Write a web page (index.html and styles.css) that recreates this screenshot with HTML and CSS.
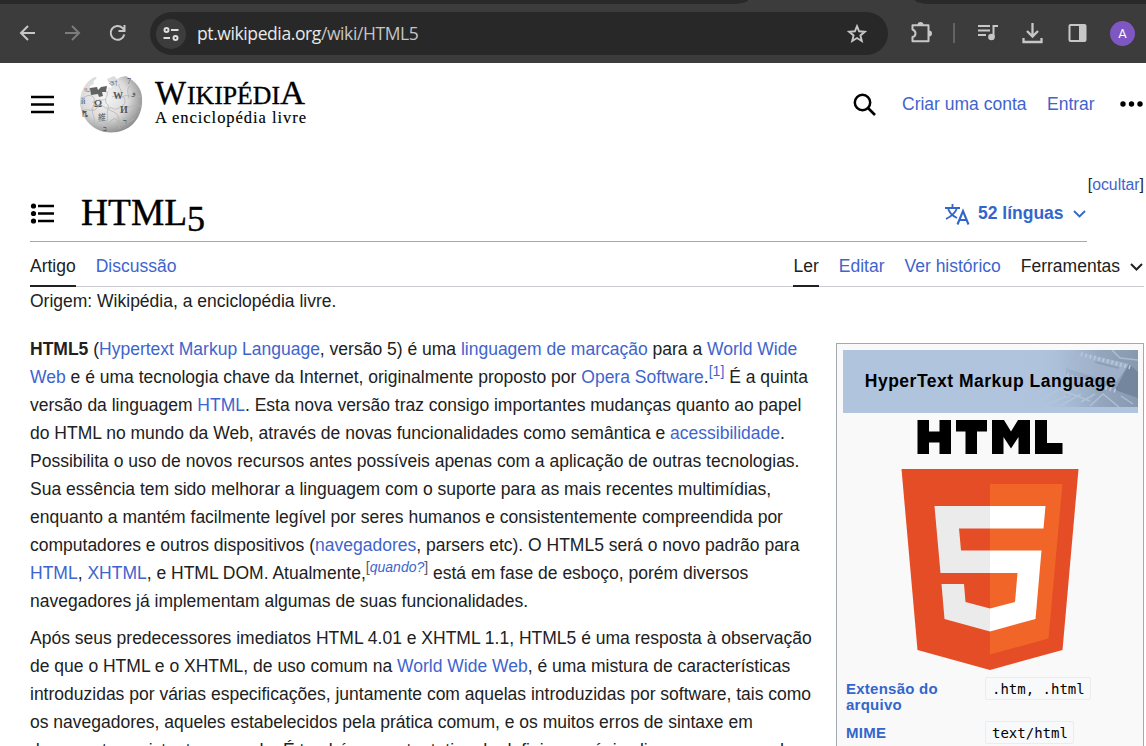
FILE: index.html
```html
<!DOCTYPE html>
<html lang="pt">
<head>
<meta charset="utf-8">
<title>HTML5 – Wikipédia, a enciclopédia livre</title>
<link rel="stylesheet" href="styles.css">
</head>
<body>
<header class="browser">
  <div class="tabstrip"><span class="tab-left"></span><span class="tab-right"></span></div>
  <div class="toolbar">
    <svg class="nav-icons" width="150" height="59" viewBox="0 4 150 59" fill="none" stroke="#c7c7c7" stroke-width="2">
      <path d="M35 33H22M28 26L21 33L28 40"/>
      <path stroke="#7c7c7c" d="M65 33H78M72 26L79 33L72 40"/>
      <path d="M124.300 34.500A6.900 6.900 0 1 1 122.500 28L124.500 30.500M124.500 25V31H118.500"/>
    </svg>
    <div class="address">
      <span class="site-info">
        <svg width="18" height="18" viewBox="0 0 18 18" fill="none" stroke="#dedede" stroke-width="2"><circle cx="4.500" cy="5" r="2"/><path d="M9 5H16.500M1.500 13H8"/><circle cx="13.500" cy="13" r="2"/></svg>
      </span>
      <span class="url">pt.wikipedia.org<span class="path">/wiki/HTML5</span></span>
      <svg class="star" width="22" height="22" viewBox="0 0 22 22" fill="none" stroke="#c7c7c7" stroke-width="1.900"><path d="M11 3.200L13.100 8.300L18.800 8.700L14.400 12.400L15.800 18L11 15L6.200 18L7.600 12.400L3.200 8.700L8.900 8.300Z"/></svg>
    </div>
    <svg class="tools" width="258" height="59" viewBox="888 4 258 59" fill="none" stroke="#c7c7c7" stroke-width="2">
      <path d="M912.500 25.200H928.500V41.300H912.500V37C916.500 36 916.500 31 912.500 29.500V25.200Z" stroke-linejoin="round"/>
      <path d="M917.500 25A3 3 0 0 1 923.500 25ZM929 30.500A3 3 0 0 1 929 36.500Z" fill="#c7c7c7" stroke="none"/>
      <path stroke="#636363" d="M954 23V43"/>
      <path d="M978 26H990M978 30.500H990M978 35H986M993.500 37V26H998"/>
      <circle cx="991.500" cy="37" r="3.300" fill="#c7c7c7" stroke="none"/>
      <path stroke-width="2.300" d="M1032.500 23V36M1027 31L1032.500 36.500L1038 31M1023.500 38V42H1041.500V38"/>
      <rect x="1069.500" y="25" width="16" height="16" rx="1"/><path fill="#c7c7c7" stroke="none" d="M1079 25H1086V41H1079Z"/>
      <circle cx="1122.500" cy="33.500" r="12.500" fill="#7e57c2" stroke="none"/>
      <text class="avatar" x="1122.500" y="38" text-anchor="middle">A</text>
    </svg>
  </div>
</header>

<div class="page">
  <div class="site-header">
    <svg class="menu" width="24" height="20" viewBox="0 0 24 20"><path d="M1 2H24M1 9.500H24M1 17H24" stroke="#000" stroke-width="2.300"/></svg>
    <svg class="logo" width="230" height="64" viewBox="79 72 230 64">
      <defs>
        <radialGradient id="ball" cx=".4" cy=".38" r=".68"><stop offset="0" stop-color="#f5f5f5"/><stop offset=".55" stop-color="#dcdcdc"/><stop offset="1" stop-color="#858585"/></radialGradient>
      </defs>
      <path fill="url(#ball)" d="M95 77L97 78L93.500 81L94 84L90 86V91L96 90L98 94H102V91H108V87L111 88L113 83L108 82L107 79L114 76L117 79L121 77L126 76L129 78C139 84 143 92 142 103C141 120 129 132.500 111 132.500C94 132.500 81 119 80 103C80 91 86 81 95 77Z"/>
      <path fill="#626262" d="M90 88L97 87L98 90L101 87L107 86L106 92L102 92L103 96L99 97L98 94L91 95Z"/>
      <path fill="none" stroke="#b4b4b4" stroke-width=".8" d="M81 98C87 97 87 94 92 96S93 109 91 110M92 102C97 103 96 99 101 100S108 96 107 91M82 111C90 107 91 114 97 108S105 110 108 108M106 99C104 105 110 103 108 109S109 120 106 122M109 108C114 107 113 111 119 108S126 103 124 97M112 97C118 94 116 101 122 97S133 99 141 96M119 84C118 88 122 88 122 97M108 109C114 113 117 111 119 120S124 124 134 119M93 109C91 116 96 116 94 124M97 122C103 119 106 127 111 121S119 122 120 129M124 107C130 109 133 103 141 106M130 86C125 90 130 95 128 99"/>
      <g class="glyphs"><text x="94" y="107">Ω</text><text x="113" y="99">W</text><text x="120" y="113">И</text><text x="98" y="120" class="small">維</text><text x="81" y="104" class="small">й</text><text x="82" y="117" class="small">ቬ</text><text x="123" y="124" class="small">ר</text><text x="132" y="95" class="small">و</text><text x="109" y="86" class="small">কা</text><text x="84" y="91" class="small">ய</text><text x="103" y="131" class="small">ב</text><text x="127" y="84" class="small">7</text></g>
      <g class="wordmark"><g stroke="#000" stroke-width=".35"><text x="155" y="103.500" font-size="33" textLength="31" lengthAdjust="spacingAndGlyphs">W</text><text x="187" y="103.500" font-size="25" textLength="93" lengthAdjust="spacingAndGlyphs">IKIPÉDI</text><text x="280" y="103.500" font-size="33" textLength="25" lengthAdjust="spacingAndGlyphs">A</text></g>
      <text x="155" y="123" font-size="16.500" textLength="151" stroke="#000" stroke-width=".15">A enciclopédia livre</text></g>
    </svg>
    <svg class="search" width="24" height="24" viewBox="0 0 24 24" fill="none" stroke="#000"><circle cx="9.500" cy="9.500" r="7.700" stroke-width="2.500"/><path d="M15 15L22 22" stroke-width="2.700"/></svg>
    <a class="create">Criar uma conta</a><a class="login">Entrar</a>
    <svg class="dots" width="24" height="6"><circle cx="3" cy="3" r="2.700"/><circle cx="11.500" cy="3" r="2.700"/><circle cx="20" cy="3" r="2.700"/></svg>
  </div>
  <div class="hide">[<a>ocultar</a>]</div>
  <div class="title-row">
    <svg class="toc" width="24" height="21" viewBox="0 0 24 21"><path d="M8 3H24M8 10.500H24M8 18H24" stroke="#000" stroke-width="2.300"/><circle cx="3.500" cy="3" r="2.600"/><circle cx="3.500" cy="10.500" r="2.600"/><circle cx="3.500" cy="18" r="2.600"/></svg>
    <svg class="title" width="130" height="46"><text x="1" y="30.500" textLength="106" lengthAdjust="spacingAndGlyphs">HTML</text><text x="107" y="36.500" font-size="35" textLength="18" lengthAdjust="spacingAndGlyphs">5</text></svg>
    <svg class="lang-icon" width="26" height="22" viewBox="0 0 26 22" fill="none" stroke="#36c" stroke-width="1.800"><path d="M0 4H15M7.500 0V4M3 4C4 9 8 12 12 14M12 4C10 10 5 13 1 15"/><path d="M12.500 20.500L18 7L23.500 20.500M14.500 16H21.500" stroke-width="2.100"/></svg>
    <b class="langs">52 línguas</b>
    <svg class="chev" width="13" height="8" viewBox="0 0 13 8" fill="none" stroke="#36c" stroke-width="1.800"><path d="M1 1L6.500 6.500L12 1"/></svg>
  </div>
  <nav class="tabs">
    <span class="on">Artigo</span><a>Discussão</a>
    <span class="on read">Ler</span><a>Editar</a><a>Ver histórico</a><span>Ferramentas</span>
    <svg class="chev2" width="13" height="8" viewBox="0 0 13 8" fill="none" stroke="#202122" stroke-width="2"><path d="M1 1L6.500 6.500L12 1"/></svg>
  </nav>
  <div class="origin">Origem: Wikipédia, a enciclopédia livre.</div>
  <main class="content">
    <article>
      <p><span><b>HTML5</b> (<a>Hypertext Markup Language</a>, versão 5) é uma <a>linguagem de marcação</a> para a <a>World Wide</a></span>
      <span><a>Web</a> e é uma tecnologia chave da Internet, originalmente proposto por <a>Opera Software</a>.<sup><a>[1]</a></sup> É a quinta</span>
      <span>versão da linguagem <a>HTML</a>. Esta nova versão traz consigo importantes mudanças quanto ao papel</span>
      <span>do HTML no mundo da Web, através de novas funcionalidades como semântica e <a>acessibilidade</a>.</span>
      <span>Possibilita o uso de novos recursos antes possíveis apenas com a aplicação de outras tecnologias.</span>
      <span>Sua essência tem sido melhorar a linguagem com o suporte para as mais recentes multimídias,</span>
      <span>enquanto a mantém facilmente legível por seres humanos e consistentemente compreendida por</span>
      <span>computadores e outros dispositivos (<a>navegadores</a>, parsers etc). O HTML5 será o novo padrão para</span>
      <span><a>HTML</a>, <a>XHTML</a>, e HTML DOM. Atualmente,<sup class="when">[<a><i>quando?</i></a>]</sup> está em fase de esboço, porém diversos</span>
      <span>navegadores já implementam algumas de suas funcionalidades.</span></p>
      <p><span>Após seus predecessores imediatos HTML 4.01 e XHTML 1.1, HTML5 é uma resposta à observação</span>
      <span>de que o HTML e o XHTML, de uso comum na <a>World Wide Web</a>, é uma mistura de características</span>
      <span>introduzidas por várias especificações, juntamente com aquelas introduzidas por software, tais como</span>
      <span>os navegadores, aqueles estabelecidos pela prática comum, e os muitos erros de sintaxe em</span>
      <span>documentos existentes na rede. É também uma tentativa de definir uma única linguagem marcada</span></p>
    </article>
    <aside>
      <div class="box-title"><svg class="circuit" width="125" height="57" viewBox="-10 0 125 57"><defs><linearGradient id="fade"><stop stop-color="#b0c4de"/><stop offset="1" stop-color="#8799b0"/></linearGradient><linearGradient id="veil"><stop stop-color="#b0c4de"/><stop offset=".3" stop-color="#b0c4de" stop-opacity=".8"/><stop offset=".7" stop-color="#b0c4de" stop-opacity="0"/></linearGradient></defs><path fill="url(#fade)" d="M-10 0H115V57H-10Z"/><path d="M43 18L56 2L106 14L92 40L43 25Z" fill="#8d9fb7"/><path d="M43 18L56 2L106 14L92 34Z" fill="#9fb0c8"/><path d="M92 40L106 14L115 22V48Z" fill="#74869d"/><path d="M44 25L93 41M58 4L110 18" stroke="#bccadd" stroke-width="4" stroke-dasharray="1.500 3"/><path d="M72 12L96 18" stroke="#8d9fb7" stroke-width="2"/><path d="M10 55L36 39L67 51M22 56L43 46M37 56L58 44M67 56L80 44L96 57M35 26L48 34M89 0L97 8L115 10M58 52L72 44M98 46L110 54" fill="none" stroke="#c2d0e2" opacity=".6" stroke-width="1.500"/><g fill="none" stroke="#c2d0e2" opacity=".6"><circle cx="35" cy="24" r="2"/><circle cx="43" cy="32" r="2"/><circle cx="53" cy="38" r="2"/><circle cx="44" cy="45" r="3"/></g><path fill="url(#veil)" d="M-10 0H115V57H-10Z"/></svg><b>HyperText Markup Language</b></div>
      <svg class="html-logo" width="180" height="254" viewBox="900 418 180 254">
        <path d="M917.500 420H929V431.500H939.500V420H951V454H939.500V442.500H929V454H917.500ZM956 420H987V431.500H977V454H965.500V431.500H956ZM992 420H1004L1011 431.500L1018 420H1030V454H1018.500V437L1011 448.500L1003.500 437V454H992ZM1035 420H1047V443H1062.500V454H1035Z"/>
        <path fill="#e44d26" d="M901.500 469H1078.500L1062.500 650L990 670L917.500 650Z"/><path fill="#f16529" d="M990 484H1062.500L1048.500 638.500L990 654.500Z"/>
        <path fill="#ebebeb" d="M934.500 506H990V528.500H959L961 550.500H990V573H940.500ZM941.500 584H964L965.500 602L990 608.500V631.500L944.500 619Z"/>
        <path fill="#fff" d="M990 506H1045.500L1043.500 528.500H990ZM990 550.500H1041.500L1035.500 619L990 631.500V608.500L1015 602L1017.500 573H990Z"/>
      </svg>
      <div class="facts"><a>Extensão do<br>arquivo</a><div><code>.htm, .html</code></div><a>MIME</a><div><code>text/html</code></div></div>
    </aside>
  </main>
</div>
</body>
</html>
```
FILE: styles.css
```css
* { box-sizing: border-box; }
body { margin: 0; width: 1146px; height: 746px; overflow: hidden; background: #fff; color: #202122; font: 17.5px/28px "Liberation Sans", Arial, sans-serif; }
a { color: #3e64cd; text-decoration: none; }
svg { display: block; flex: none; }
.browser { height: 63px; background: #3c3c3c; }
.tabstrip { height: 4px; display: flex; justify-content: space-between; }
.tab-left { width: 748px; background: #292929; border-bottom-right-radius: 16px 4px; }
.tab-right { width: 231px; background: #292929; border-bottom-left-radius: 16px 4px; }
.toolbar { height: 59px; display: flex; }
.address { margin-top: 8px; width: 738px; height: 43px; border-radius: 22px; background: #282828; display: flex; align-items: center; padding: 0 20px 0 6px; }
.site-info { width: 30px; height: 30px; border-radius: 50%; background: #3c3c3c; display: flex; align-items: center; justify-content: center; }
.url { flex: 1; margin: -2px 0 0 11px; color: #e8e8e8; font: 17.5px/24px "Open Sans", "Noto Sans", sans-serif; letter-spacing: -.4px; }
.path { color: #c5c5c5; }
.avatar { fill: #fff; stroke: none; font: 13px Roboto, sans-serif; }
.page { padding-left: 30px; height: 683px; overflow: hidden; }
.site-header { height: 113px; display: flex; padding-top: 9px; }
.menu { margin-top: 23px; }
.logo { margin-left: 25px; }
.glyphs { font: bold 10px "Liberation Serif", serif; fill: #555; }
.small { font-size: 8px; font-weight: normal; font-family: "Liberation Serif", "Noto Sans CJK JP", serif; }
.wordmark { font-family: "Liberation Serif", serif; fill: #000; }
.search { margin: 21px 0 0 544px; }
.create { margin: 18px 0 0 25px; width: 145px; white-space: nowrap; }
.login { margin-top: 18px; width: 73px; }
.dots { margin-top: 29px; }
.hide { height: 18px; text-align: right; padding-right: 2px; font-size: 15.8px; line-height: 18px; }
.title-row { height: 48px; width: 1057px; border-bottom: 1px solid #a2a9b1; display: flex; }
.toc { margin-top: 9px; }
.title { margin-left: 26px; font-size: 38px; fill: #000; stroke: #000; stroke-width: .4px; }
.title text { font-family: "Liberation Serif", serif; }
.lang-icon { margin: 10px 0 0 735px; }
.langs { margin: 5px 0 0 7px; width: 95px; color: #36c; white-space: nowrap; }
.chev { margin-top: 16px; }
.tabs { height: 45px; width: 1114px; border-bottom: 1px solid #c8ccd1; display: flex; gap: 20px; line-height: 48px; white-space: nowrap; }
.on { height: 45px; border-bottom: 2px solid #202122; }
.read { margin-left: auto; }
.chev2 { margin: 21px 1px 0 -10px; }
.origin { height: 48px; }
.content { display: flex; height: 411px; overflow: hidden; }
article { width: 806px; }
article p { margin: 0 0 9px; }
article span { display: block; height: 28px; white-space: nowrap; }
sup { font-size: 14px; line-height: 0; vertical-align: 7px; }
.when { color: #54595d; }
aside { margin-top: 8px; width: 308px; height: 500px; border: 1px solid #a2a9b1; background: #f9f9f9; padding: 6px 5px 6px 6px; }
.box-title { position: relative; width: 295px; height: 63px; padding-bottom: 2px; background: #b0c4de; display: flex; align-items: center; justify-content: center; color: #000; white-space: nowrap; letter-spacing: .5px; }
.circuit { position: absolute; right: 0; top: 0; }
.box-title b { position: relative; }
.html-logo { margin: 5px 0 0 57px; }
.facts { margin: 9px 0 0 3px; display: grid; grid-template-columns: 139px 1fr; row-gap: 12px; font-size: 15px; line-height: 16px; letter-spacing: .25px; }
.facts a { font-weight: bold; color: #36c; }
.facts div { height: 16px; }
.facts code { display: inline-block; height: 23px; margin-top: -4px; padding: 2px 5px 2px 6px; border: 1px solid #eaecf0; border-radius: 2px; background: #f8f9fa; color: #000; font: 14px/18px "DejaVu Sans Mono", monospace; letter-spacing: 0; }
```
